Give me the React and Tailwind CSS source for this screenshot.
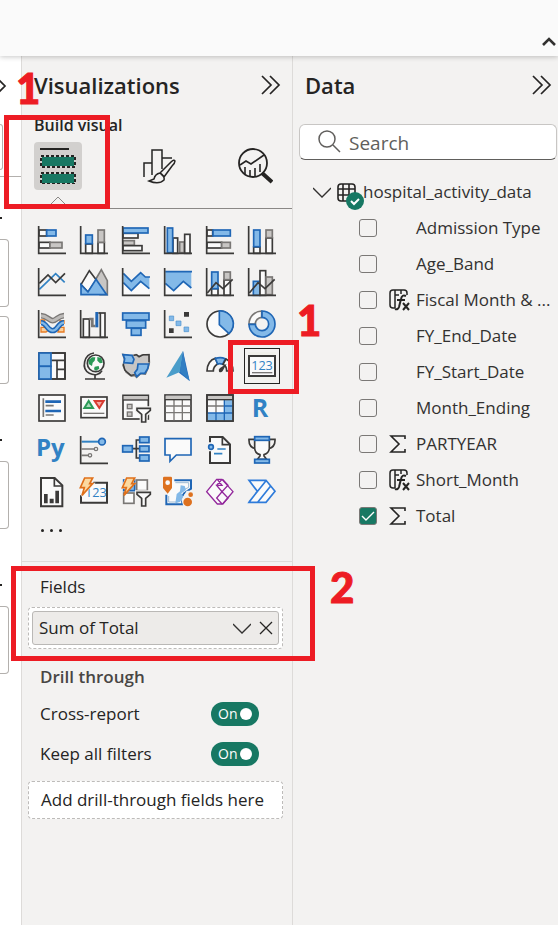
import React, { useState } from "react";

const DARK = "#3b3a39";
const GREY = "#797775";
const GFILL = "#c8c6c4";
const BLUE = "#1f66b5";
const LIGHT = "#83b9e8";
const PALE = "#fafafa";
const GREEN = "#177863";

function Box({ x, y, x2, y2, c = DARK, f = PALE, w = 5 }) {
  return <rect x={x} y={y} width={x2 - x} height={y2 - y} fill={f} stroke={c} strokeWidth={w} />;
}
const White = (p) => <Box {...p} />;
const Blue = (p) => <Box c={BLUE} f={LIGHT} {...p} />;
const Gray = (p) => <Box c={GREY} f={GFILL} {...p} />;
const Axis = () => <path d="M2 0V82H84" fill="none" stroke={DARK} strokeWidth="5" />;
const Line = ({ d, c = DARK, w = 5, f = "none" }) => <path d={d} fill={f} stroke={c} strokeWidth={w} />;

const Funnel = () => (
  <>
    <path d="M42 40H87V52L74 64V87H56V64L42 52Z" fill="#f3f2f1" stroke="#f3f2f1" strokeWidth="6" />
    <Line d="M45 43H85V49L71 61V84H59V61L45 49Z" f={PALE} />
  </>
);
const Bolt = () => (
  <path d="M14 0H38L29 17H38L6 52L13 29H1Z" fill="#fcd9a0" stroke="#e0701a" strokeWidth="5" />
);

const visuals = [
  ["Stacked bar chart", <><White x={3} y={12} x2={26} y2={30} /><Blue x={26} y={12} x2={54} y2={30} /><White x={3} y={49} x2={36} y2={66} /><Gray x={36} y={49} x2={72} y2={66} /><Axis /></>],
  ["Stacked column chart", <><White x={17} y={54} x2={37} y2={82} /><Blue x={17} y={27} x2={37} y2={53} /><White x={54} y={49} x2={73} y2={82} /><Gray x={54} y={12} x2={73} y2={49} /><Axis /></>],
  ["Clustered bar chart", <><White x={3} y={22} x2={48} y2={36} /><Blue x={3} y={6} x2={78} y2={21} /><Gray x={3} y={44} x2={37} y2={58} /><White x={3} y={59} x2={60} y2={74} /><Axis /></>],
  ["Clustered column chart", <><White x={27} y={36} x2={41} y2={82} /><Blue x={10} y={6} x2={26} y2={80} /><Gray x={47} y={48} x2={61} y2={80} /><White x={62} y={25} x2={78} y2={82} /><Axis /></>],
  ["100% stacked bar chart", <><White x={3} y={12} x2={20} y2={30} /><Blue x={21} y={12} x2={73} y2={30} /><White x={3} y={49} x2={47} y2={66} /><Gray x={47} y={49} x2={73} y2={66} /><Axis /></>],
  ["100% stacked column chart", <><White x={17} y={63} x2={36} y2={82} /><Blue x={17} y={12} x2={36} y2={62} /><White x={54} y={36} x2={73} y2={82} /><Gray x={54} y={12} x2={73} y2={35} /><Axis /></>],

  ["Line chart", <><Line d="M4 64L53 17L80 43" c="#3182c4" /><Line d="M4 46L30 21L53 44L81 16" /><Axis /></>],
  ["Area chart", <><Line d="M46 36L64 5L82 38V80H60Z" c={GREY} f={GFILL} /><Line d="M3 50L28 8L49 36L24 72Z" f={PALE} /><Line d="M3 50L24 72L48 34L80 80H3Z" c={BLUE} f={LIGHT} /></>],
  ["Stacked area chart", <><path d="M4 44L28 68L56 42L82 64V80H4Z" fill={PALE} /><path d="M4 16L28 40L56 14L70 27H82V62L56 40L28 68L4 44Z" fill={LIGHT} /><Line d="M4 44L28 68L56 40L82 62M4 16L28 40L56 14L70 27H84" c={BLUE} /><Axis /></>],
  ["100% stacked area chart", <><path d="M4 10H82V80H4Z" fill={PALE} /><path d="M4 10H82V60L58 40L29 68L4 46Z" fill={LIGHT} /><Line d="M4 11H84M4 46L29 68L58 40L82 60" c={BLUE} /><Axis /></>],
  ["Line and stacked column chart", <><White x={17} y={62} x2={36} y2={82} /><Blue x={17} y={12} x2={36} y2={62} /><White x={54} y={36} x2={73} y2={82} /><Gray x={54} y={12} x2={73} y2={35} /><Line d="M4 75L30 44L51 62L80 34" /><Axis /></>],
  ["Line and clustered column chart", <><Blue x={16} y={40} x2={36} y2={82} /><White x={36} y={8} x2={53} y2={82} /><Gray x={54} y={27} x2={73} y2={80} /><Line d="M4 75L30 44L51 62L80 34" /><Axis /></>],

  ["Ribbon chart", <><path d="M9 52H24L32 60L24 66H9ZM64 52H78V66H60ZM9 30H20V40H9ZM66 32H78V40H66Z" fill="#fbd09c" stroke="#e77c24" strokeWidth="4" /><Line d="M9 17C28 17 32 32 44 32S60 17 78 17" c={GREY} w={17} /><Line d="M9 17C28 17 32 32 44 32S60 17 78 17" c="#bdbbb9" w={9} /><Line d="M9 38C26 38 28 62 44 62S60 38 78 38" c={BLUE} w={16} /><Line d="M9 38C26 38 28 62 44 62S60 38 78 38" c={LIGHT} w={7} /><Axis /></>],
  ["Waterfall chart", <><White x={10} y={27} x2={28} y2={82} /><Line d="M28 27H37V48H46" c={GREY} w={8} /><path d="M46 6H55V52H46Z" fill={BLUE} /><White x={61} y={9} x2={75} y2={82} /><Line d="M55 9H61" /><Axis /></>],
  ["Funnel", <><Blue x={2} y={9} x2={81} y2={30} /><Blue x={13} y={32} x2={71} y2={54} /><Blue x={28} y={55} x2={57} y2={76} /></>],
  ["Scatter chart", <><path d="M60 6h15v14h-15zM15 55h14v14h-14z" fill={DARK} /><path d="M16 18h13v14h-13zM36 33h15v14h-15zM60 51h14v14h-14z" fill={LIGHT} stroke="#4b92cf" strokeWidth="2" /><Axis /></>],
  ["Pie chart", <><circle cx="42" cy="42" r="39" fill={PALE} stroke={DARK} strokeWidth="5" /><Line d="M40 3A39 39 0 0 1 69 71L40 44Z" c={BLUE} f={LIGHT} /></>],
  ["Donut chart", <><Line d="M41 3A39 39 0 0 0 3 42H22A20 20 0 0 1 41 22Z" c={GREY} f={PALE} /><Line d="M42 3A39 39 0 1 1 3 43H22A20 20 0 1 0 42 22Z" c={BLUE} f={LIGHT} /></>],

  ["Treemap", <><White x={3} y={3} x2={81} y2={81} /><Line d="M40 25H81M57 25V81M57 52H81" /><Blue x={3} y={3} x2={39} y2={43} w={5} /><Blue x={3} y={43} x2={39} y2={81} w={5} /><path d="M42 3H81V81H42" fill="none" stroke={DARK} strokeWidth="5" /></>],
  ["Map", <><circle cx="47" cy="34" r="25" fill={PALE} stroke={DARK} strokeWidth="5" /><path d="M26 24L36 16H46L44 26L38 32L36 42L26 36ZM52 15L64 18L68 32L60 34L52 26ZM44 44L56 42L58 50L48 56L42 52Z" fill="#2b9a57" /><Line d="M42 3C12 6 2 50 28 64C44 72 60 68 66 56M45 69V81M15 81H75" /></>],
  ["Filled map", <><Line d="M3 8L25 12L42 8L50 14L60 9L81 8L82 32L78 48L70 66L56 64L44 76L38 70L28 72L12 60L3 40L8 24Z" f={GFILL} c={GREY} /><Line d="M3 8L30 10L36 22L32 34L6 32L8 20ZM48 36H80L77 50L68 64H56L44 74L38 62L46 52Z" c={BLUE} f={LIGHT} /><Line d="M36 10L44 8L52 14L64 8H81V30M4 36L8 54L26 70L38 68" w={4} /></>],
  ["Azure map", <><path d="M57 -3L77 87L45 62Z" fill="#2369bd" /><path d="M57 -3L7 77L48 60Z" fill="#4a9dca" /><path d="M57 -3L66 48L77 87L48 60Z" fill="#327fc3" /></>],
  ["Gauge", <><Line d="M3 57C3 36 14 22 28 19L35 36C28 40 22 46 22 57Z" f={PALE} /><Line d="M28 19Q44 14 58 20L50 37Q42 33 35 36Z" c={BLUE} f={LIGHT} /><Line d="M60 21C74 28 81 40 81 57H62C62 48 58 40 51 37Z" f={PALE} /><path d="M62 35L50 57Q45 63 39 59Q36 53 42 48Z" fill={DARK} /></>],
  ["Card", <><White x={3} y={12} x2={81} y2={72} w={6} /><text x="42" y="55" textAnchor="middle" fontSize="38" fontFamily="Open Sans, sans-serif" fill="#3182c4">123</text><Line d="M12 62H73" c={GREY} w={4} /></>],

  ["Slicer", <><White x={3} y={3} x2={81} y2={81} /><path d="M22 19H69V27H22ZM22 47H69V55H22Z" fill={BLUE} /><Line d="M16 13V69M23 35H47M23 63H47" c={GREY} /></>],
  ["KPI", <><White x={3} y={9} x2={81} y2={71} /><Line d="M13 42L26 21L39 42Z" c="#2b9a57" f="#a7d8b8" w={6} /><Line d="M44 21H71L58 42Z" c="#d83b31" f="#f2a8a4" w={6} /><Line d="M10 58H73" c={GREY} w={4} /></>],
  ["Filter slicer", <><White x={3} y={4} x2={79} y2={75} /><path d="M5 6H77V18H5Z" fill={GFILL} /><Line d="M3 18H79" w={4} /><Gray x={16} y={31} x2={30} y2={44} w={4} /><Gray x={16} y={54} x2={30} y2={67} w={4} /><Funnel /></>],
  ["Table", <><White x={3} y={3} x2={81} y2={81} /><path d="M5 5H79V16H5Z" fill={GFILL} /><Line d="M5 36H79M5 56H79M30 18V79M55 18V79" c={GREY} w={4} /><Line d="M3 17H81" w={4} /></>],
  ["Matrix", <><White x={3} y={3} x2={81} y2={81} /><path d="M5 5H79V16H5Z" fill={GFILL} /><path d="M55 18H80V80H4V57H55Z" fill={LIGHT} /><Line d="M5 36H55M30 18V57" c={GREY} w={4} /><Line d="M55 36H80M55 18V80M30 57V80M4 57H80" c={BLUE} w={4} /><Line d="M3 17H81" w={4} /><rect x="3" y="3" width="78" height="78" fill="none" stroke={DARK} strokeWidth="5" /></>],
  ["R script visual", <text x="11" y="68" fontSize="75" fontWeight="700" fontFamily="Open Sans, sans-serif" fill="#3182c4">R</text>],

  ["Python visual", <text x="-6" y="59" fontSize="72" fontWeight="700" fontFamily="Open Sans, sans-serif" fill="#3182c4">Py</text>],
  ["Key influencers", <><Line d="M5 17H56" c="#3182c4" w={6} /><Line d="M5 39H43M5 58H24" c={GREY} /><circle cx="66" cy="17" r="10" fill={LIGHT} stroke={BLUE} strokeWidth="5" /><circle cx="48" cy="39" r="5" fill={PALE} stroke={GREY} strokeWidth="4" /><circle cx="30" cy="58" r="5" fill={PALE} stroke={GREY} strokeWidth="4" /><Axis /></>],
  ["Decomposition tree", <><Line d="M31 38H52M52 12H43V66H52" /><Blue x={2} y={29} x2={31} y2={48} /><Blue x={53} y={3} x2={81} y2={20} /><Blue x={53} y={30} x2={81} y2={47} /><Blue x={53} y={57} x2={81} y2={75} /></>],
  ["Q&A", <Line d="M3 8H81V57H37L18 76V57H3Z" c={BLUE} f={PALE} />],
  ["Smart narrative", <><path d="M12 3H50L72 25V81H12Z" fill={PALE} /><Line d="M12 19V3H50L72 25V81H12V46" w={6} /><Line d="M49 3V26H72" w={5} /><Line d="M34 39H59M24 53H49" c="#3182c4" /><circle cx="15" cy="33" r="7" fill={LIGHT} stroke={BLUE} strokeWidth="5" /></>],
  ["Goals", <><Line d="M20 10H3C2 28 10 36 23 38M64 10H81C82 28 74 36 61 38" /><Line d="M20 10V38Q22 52 36 56V60L28 70H56L48 60V56Q62 52 64 38V10" f={PALE} /><Blue x={20} y={2} x2={64} y2={13} /><Blue x={20} y={70} x2={64} y2={81} /></>],

  ["Paginated report", <><Line d="M9 0V85H73V22L50 0Z" f={PALE} w={6} /><Line d="M49 0V24H73" /><path d="M18 48H29V76H18ZM35 62H47V76H35ZM52 38H63V76H52Z" fill={DARK} /></>],
  ["Card (new)", <><path d="M3 14H81V74H3Z" fill={PALE} /><Line d="M3 52V74H81V14H36" w={6} /><text x="15" y="57" fontSize="38" fontFamily="Open Sans, sans-serif" fill="#3182c4">123</text><path d="M12 -4H46L39 14H47L10 52L3 56L10 32H-5Z" fill="#f3f2f1" /><Bolt /></>],
  ["Slicer (new)", <><Box x={5} y={6} x2={38} y2={38} c={BLUE} f={LIGHT} /><Box x={44} y={6} x2={76} y2={38} c={GREY} /><Box x={5} y={45} x2={36} y2={76} c={GREY} /><path d="M12 -4H42L34 14H42L6 52L10 32H-5Z" fill="#f3f2f1" /><Bolt /><Funnel /></>],
  ["ArcGIS Maps", <><path d="M7 7H81V79H7Z" fill={PALE} /><Line d="M31 7H81V32L60 46L52 60L56 79H7V50" c={BLUE} w={6} /><Line d="M34 14H74V28L54 38L44 50L40 72H14V54" c="#9cbad4" w={3} /><path d="M50 22L62 24L66 36L52 46L58 56L48 72L34 76L38 48L48 40Z" fill={LIGHT} /><path d="M58 84L52 66L68 38H92V84Z" fill="#f3f2f1" /><path d="M-3 0Q-3 -4 1 -4H20Q24 -4 24 0V30L11 47L-3 30Z" fill="#dd711f" /><circle cx="11" cy="14" r="7" fill={PALE} /><circle cx="71" cy="72" r="13" fill="#dd711f" /><circle cx="80" cy="50" r="7" fill="#dd711f" /></>],
  ["Power Apps", <><Line d="M2 41L32 4H48L81 41L50 78H34Z" c="#93289c" f={PALE} w={4} /><Line d="M34 4L48 22L32 22L48 41L66 22L50 4M48 41L32 60L48 78M48 41L66 60L50 78M48 4L32 22L48 41L32 60L48 78" c="#93289c" w={4} /></>],
  ["Power Automate", <Line d="M3 7H54L81 40L54 73H3L28 40ZM54 8L3 72M68 24L29 73" c="#2e7bda" f={PALE} />],
];

function Double() {
  return (
    <svg className="h-5 w-5" viewBox="0 0 20 20" fill="none" stroke="#252423" strokeWidth="1.7">
      <path d="M1 1L10 10L1 19M9 1L18 10L9 19" />
    </svg>
  );
}

function Chevron() {
  return (
    <svg className="h-[18px] w-[18px]" viewBox="0 0 18 18" fill="none" stroke="#323130" strokeWidth="1.3">
      <path d="M0 5L9 14L18 5" />
    </svg>
  );
}

function FxIcon() {
  return (
    <svg className="h-6 w-6" viewBox="0 0 24 24" fill="none" stroke="#252423" strokeWidth="1.5">
      <path d="M7 20H5Q2 20 2 17V5Q2 2 5 2H16Q19 2 19 5V7M7 2V20M7 7H11M13 2V6" />
      <path d="M18 8Q14 6 13 11L11 19Q10 22 7 21M9 12H17" strokeWidth="2" />
      <path d="M15 15L21 22M21 15L15 22" strokeWidth="2" />
    </svg>
  );
}

function SigmaIcon() {
  return (
    <svg className="h-6 w-6" viewBox="0 0 24 24" fill="none" stroke="#252423" strokeWidth="1.6">
      <path d="M17 7V4H3L11 12L3 20H17V17" />
    </svg>
  );
}

const fields = [
  ["Admission Type", null],
  ["Age_Band", null],
  ["Fiscal Month & ...", "fx"],
  ["FY_End_Date", null],
  ["FY_Start_Date", null],
  ["Month_Ending", null],
  ["PARTYEAR", "sum"],
  ["Short_Month", "fx"],
  ["Total", "sum"],
];

function Field({ name, kind }) {
  const [on, setOn] = useState(name === "Total");
  return (
    <li>
      <label className="flex h-9 items-center whitespace-nowrap">
        <span className="grid shrink-0 place-items-center">
          <input
            type="checkbox"
            checked={on}
            onChange={() => setOn(!on)}
            className="col-start-1 row-start-1 h-[18px] w-[18px] appearance-none rounded-[3px] border border-[#7a7876] checked:bg-[#177863]"
          />
          {on && (
            <svg className="pointer-events-none col-start-1 row-start-1 h-4 w-4" viewBox="0 0 16 16" fill="none" stroke="white" strokeWidth="1.4">
              <path d="M2 8L6 12L14 4" />
            </svg>
          )}
        </span>
        <span className="ml-[11px] mr-1 h-6 w-6 shrink-0">
          {kind === "fx" && <FxIcon />}
          {kind === "sum" && <SigmaIcon />}
        </span>
        {name}
      </label>
    </li>
  );
}

function Toggle({ label }) {
  const [on, setOn] = useState(true);
  return (
    <label className="flex h-10 items-center justify-between pl-[18px] pr-[33px]">
      {label}
      <input type="checkbox" role="switch" checked={on} onChange={() => setOn(!on)} className="sr-only" />
      <span className="flex h-6 w-12 items-center justify-between rounded-full bg-[#177863] pl-[7px] pr-[7px] text-sm text-white">
        On
        <span className="h-3 w-3 rounded-full bg-white" />
      </span>
    </label>
  );
}

function Sidebar() {
  return (
    <aside className="w-[21px] shrink-0 overflow-hidden bg-white">
      <svg className="mt-5 h-5 w-2" viewBox="0 0 8 20" fill="none" stroke="#252423" strokeWidth="1.7">
        <path d="M-2 3L5 10L-2 17" />
      </svg>
      <div className="mt-7 h-[46px] w-[3px] rounded-r border border-l-0 border-[#b3b0ad]" />
      <div className="mt-[6px] h-px bg-[#b3b0ad]" />
      <div className="mt-10 h-[2px] w-[2px] bg-[#252423]" />
      <div className="mt-5 h-[68px] w-[9px] rounded-r border border-l-0 border-[#b3b0ad]" />
      <div className="mt-[9px] h-[68px] w-[9px] rounded-r border border-l-0 border-[#b3b0ad]" />
      <div className="mt-[55px] h-[2px] w-[2px] bg-[#252423]" />
      <div className="mt-5 h-[68px] w-[9px] rounded-r border border-l-0 border-[#b3b0ad]" />
      <div className="mt-[55px] h-[2px] w-[2px] bg-[#252423]" />
      <div className="mt-5 h-[68px] w-[9px] rounded-r border border-l-0 border-[#b3b0ad]" />
    </aside>
  );
}

function Visualizations() {
  return (
    <section className="w-[272px] shrink-0 border-x border-[#dddbd9]">
      <header className="flex h-[58px] items-center justify-between pl-3 pr-[11px]">
        <h2 className="text-[22px] font-semibold">Visualizations</h2>
        <button aria-label="Collapse visualizations"><Double /></button>
      </header>
      <h3 className="h-7 pl-3 pt-[3px] text-base font-semibold leading-4">Build visual</h3>
      <div className="relative flex h-[67px] items-start border-b border-[#8a8886] pl-3">
        <button aria-label="Build visual" className="grid h-12 w-12 place-items-center rounded bg-[#d2d0ce]">
          <svg className="h-9 w-9" viewBox="0 0 36 36">
            <path d="M0 1H29" stroke="#252423" strokeWidth="2" />
            <path d="M2 9H34V18H2ZM2 26H34V35H2Z" fill={GREEN} />
            <path d="M1 8H35V19H1ZM1 25H35V36H1Z" fill="none" stroke="#252423" strokeWidth="2" strokeDasharray="3 2" />
          </svg>
        </button>
        <button aria-label="Format visual" className="ml-[60px] mt-[6px]">
          <svg className="h-9 w-9" viewBox="0 0 36 36" fill="none" stroke="#252423" strokeWidth="1.5">
            <path d="M2 29V15H10V27M10 15V2H20V21M20 10H30" />
            <path d="M18 25L29 14Q32 11 33 13Q33 15 30 18L22 29M18 25Q13 26 12 31L7 33Q17 37 22 32Q23 28 18 25ZM18 25L22 29" fill="#f3f2f1" />
          </svg>
        </button>
        <button aria-label="Analytics" className="ml-[59px] mt-[6px]">
          <svg className="h-9 w-9" viewBox="0 0 36 36" fill="none" stroke="#252423" strokeWidth="1.8">
            <circle cx="16" cy="15" r="14" />
            <path d="M3 17L9 13L14 16L27 7M8 26V19M13 28V22M18 28V20M23 24V16" strokeWidth="1.6" />
            <path d="M25 25L35 34" strokeWidth="4" />
          </svg>
        </button>
        <svg className="absolute left-6 top-[54px] h-[13px] w-6" viewBox="0 0 24 13" fill="#f3f2f1">
          <path d="M0 10H24V13H0Z" />
          <path d="M4 9L12 1L20 9" stroke="#8a8886" />
        </svg>
      </div>
      <div className="grid grid-cols-6 gap-x-[14px] gap-y-[14px] pl-4 pr-4 pt-[17px]">
        {visuals.map(([name, art]) => (
          <button
            key={name}
            aria-label={name}
            className={name === "Card" ? "h-7 w-7 bg-[#f0f0eb] outline outline-offset-3 outline-[#252423]" : "h-7 w-7"}
          >
            <svg className="h-7 w-7 overflow-visible" viewBox="0 0 84 84">{art}</svg>
          </button>
        ))}
      </div>
      <button aria-label="More visuals" className="ml-[19px] mt-[23px] flex h-[3px] gap-[6px]">
        <span className="h-[3px] w-[3px] rounded-full bg-[#252423]" />
        <span className="h-[3px] w-[3px] rounded-full bg-[#252423]" />
        <span className="h-[3px] w-[3px] rounded-full bg-[#252423]" />
      </button>
      <div className="mt-[29px] border-t border-[#dddbd9] pl-[6px] pr-[9px] text-[17px]">
        <h3 className="pl-3 pt-[13px] leading-6">Fields</h3>
        <div className="mt-2 rounded border border-dashed border-[#bdbbb9] bg-white p-[3px]">
          <div className="flex h-[34px] items-center rounded-[3px] border border-[#bab8b6] bg-[#edebe9] pl-[6px] pr-1">
            <span className="grow">Sum of Total</span>
            <button aria-label="Field options"><Chevron /></button>
            <button aria-label="Remove field" className="ml-[7px]">
              <svg className="h-4 w-4" viewBox="0 0 16 16" stroke="#252423" strokeWidth="1.3">
                <path d="M2 2L14 14M14 2L2 14" />
              </svg>
            </button>
          </div>
        </div>
        <h3 className="mb-[5px] mt-4 pl-3 font-semibold leading-6 text-[#484644]">Drill through</h3>
        <div className="-ml-[6px] -mr-[9px]">
          <Toggle label="Cross-report" />
          <Toggle label="Keep all filters" />
        </div>
        <div className="mt-[7px] flex h-[38px] items-center whitespace-nowrap rounded border border-dashed border-[#bdbbb9] bg-white pl-3">
          Add drill-through fields here
        </div>
      </div>
    </section>
  );
}

function Data() {
  return (
    <section className="min-w-0 grow overflow-hidden">
      <header className="flex h-[58px] items-center justify-between pl-3 pr-[6px]">
        <h2 className="text-[22px] font-semibold">Data</h2>
        <button aria-label="Collapse data"><Double /></button>
      </header>
      <label className="ml-[6px] mr-px mt-[10px] flex h-9 items-center rounded-md border border-[#c8c6c4] border-b-[#605e5c] bg-white pl-[18px]">
        <svg className="h-6 w-6 shrink-0" viewBox="0 0 24 24" fill="none" stroke="#605e5c" strokeWidth="1.5">
          <circle cx="9" cy="9" r="8" />
          <path d="M15 15L22 22" />
        </svg>
        <input type="search" aria-label="Search" placeholder="Search" className="ml-[7px] min-w-0 grow bg-transparent pt-[2px] text-[19px] outline-none placeholder:text-[#605e5c]" />
      </label>
      <div className="mt-[14px] flex h-9 items-center pl-5 text-[17px] text-[#323130]">
        <button aria-label="Collapse table"><Chevron /></button>
        <span className="relative ml-[5px] h-[18px] w-5">
          <svg className="h-5 w-5" viewBox="0 0 20 20" fill="none" stroke="#252423" strokeWidth="1.6">
            <rect x="2" y="1" width="17" height="17" rx="3" />
            <path d="M7 1V18M13 1V18M2 6H19M2 12H19" />
          </svg>
          <svg className="absolute left-[10px] top-[9px] h-[18px] w-[18px]" viewBox="0 0 18 18" fill="none">
            <circle cx="9" cy="9" r="9" fill={GREEN} />
            <path d="M5 9L8 12L13 7" stroke="white" strokeWidth="2" />
          </svg>
        </span>
        <span className="ml-[7px]">hospital_activity_data</span>
      </div>
      <ul className="pl-[66px] text-[17px] text-[#323130]">
        {fields.map(([name, kind]) => (
          <Field key={name} name={name} kind={kind} />
        ))}
      </ul>
    </section>
  );
}

export default function App() {
  return (
    <div className="relative flex min-h-screen flex-col overflow-hidden bg-[#f3f2f1] font-['Open_Sans','Noto_Sans',sans-serif] text-[#252423]">
      <div className="relative flex h-14 items-end justify-end bg-[#fafafa] pb-2 pr-[2px] shadow-[0_1px_5px_rgba(0,0,0,0.22)]">
        <button aria-label="Collapse ribbon">
          <svg className="h-3 w-[14px]" viewBox="0 0 14 12" fill="none" stroke="#323130" strokeWidth="2.6">
            <path d="M1 9L7 3L13 9" />
          </svg>
        </button>
      </div>
      <main className="flex grow">
        <Sidebar />
        <Visualizations />
        <Data />
      </main>
      <div className="pointer-events-none absolute left-1 top-[115px] h-[94px] w-[106px] border-[5px] border-[#ed1c24]" />
      <div className="pointer-events-none absolute left-[228px] top-[340px] h-[54px] w-[71px] border-[5px] border-[#ed1c24]" />
      <div className="pointer-events-none absolute left-[11px] top-[566px] h-[95px] w-[304px] border-[5px] border-[#ed1c24]" />
      <div className="pointer-events-none font-['Lato',sans-serif] text-[42px] font-black leading-[42px] text-[#ed1c24] [-webkit-text-stroke:1px_#ed1c24]">
        <span className="absolute left-4 top-[67px]">1</span>
        <span className="absolute left-[297px] top-[299px]">1</span>
        <span className="absolute left-[330px] top-[566px]">2</span>
      </div>
    </div>
  );
}
